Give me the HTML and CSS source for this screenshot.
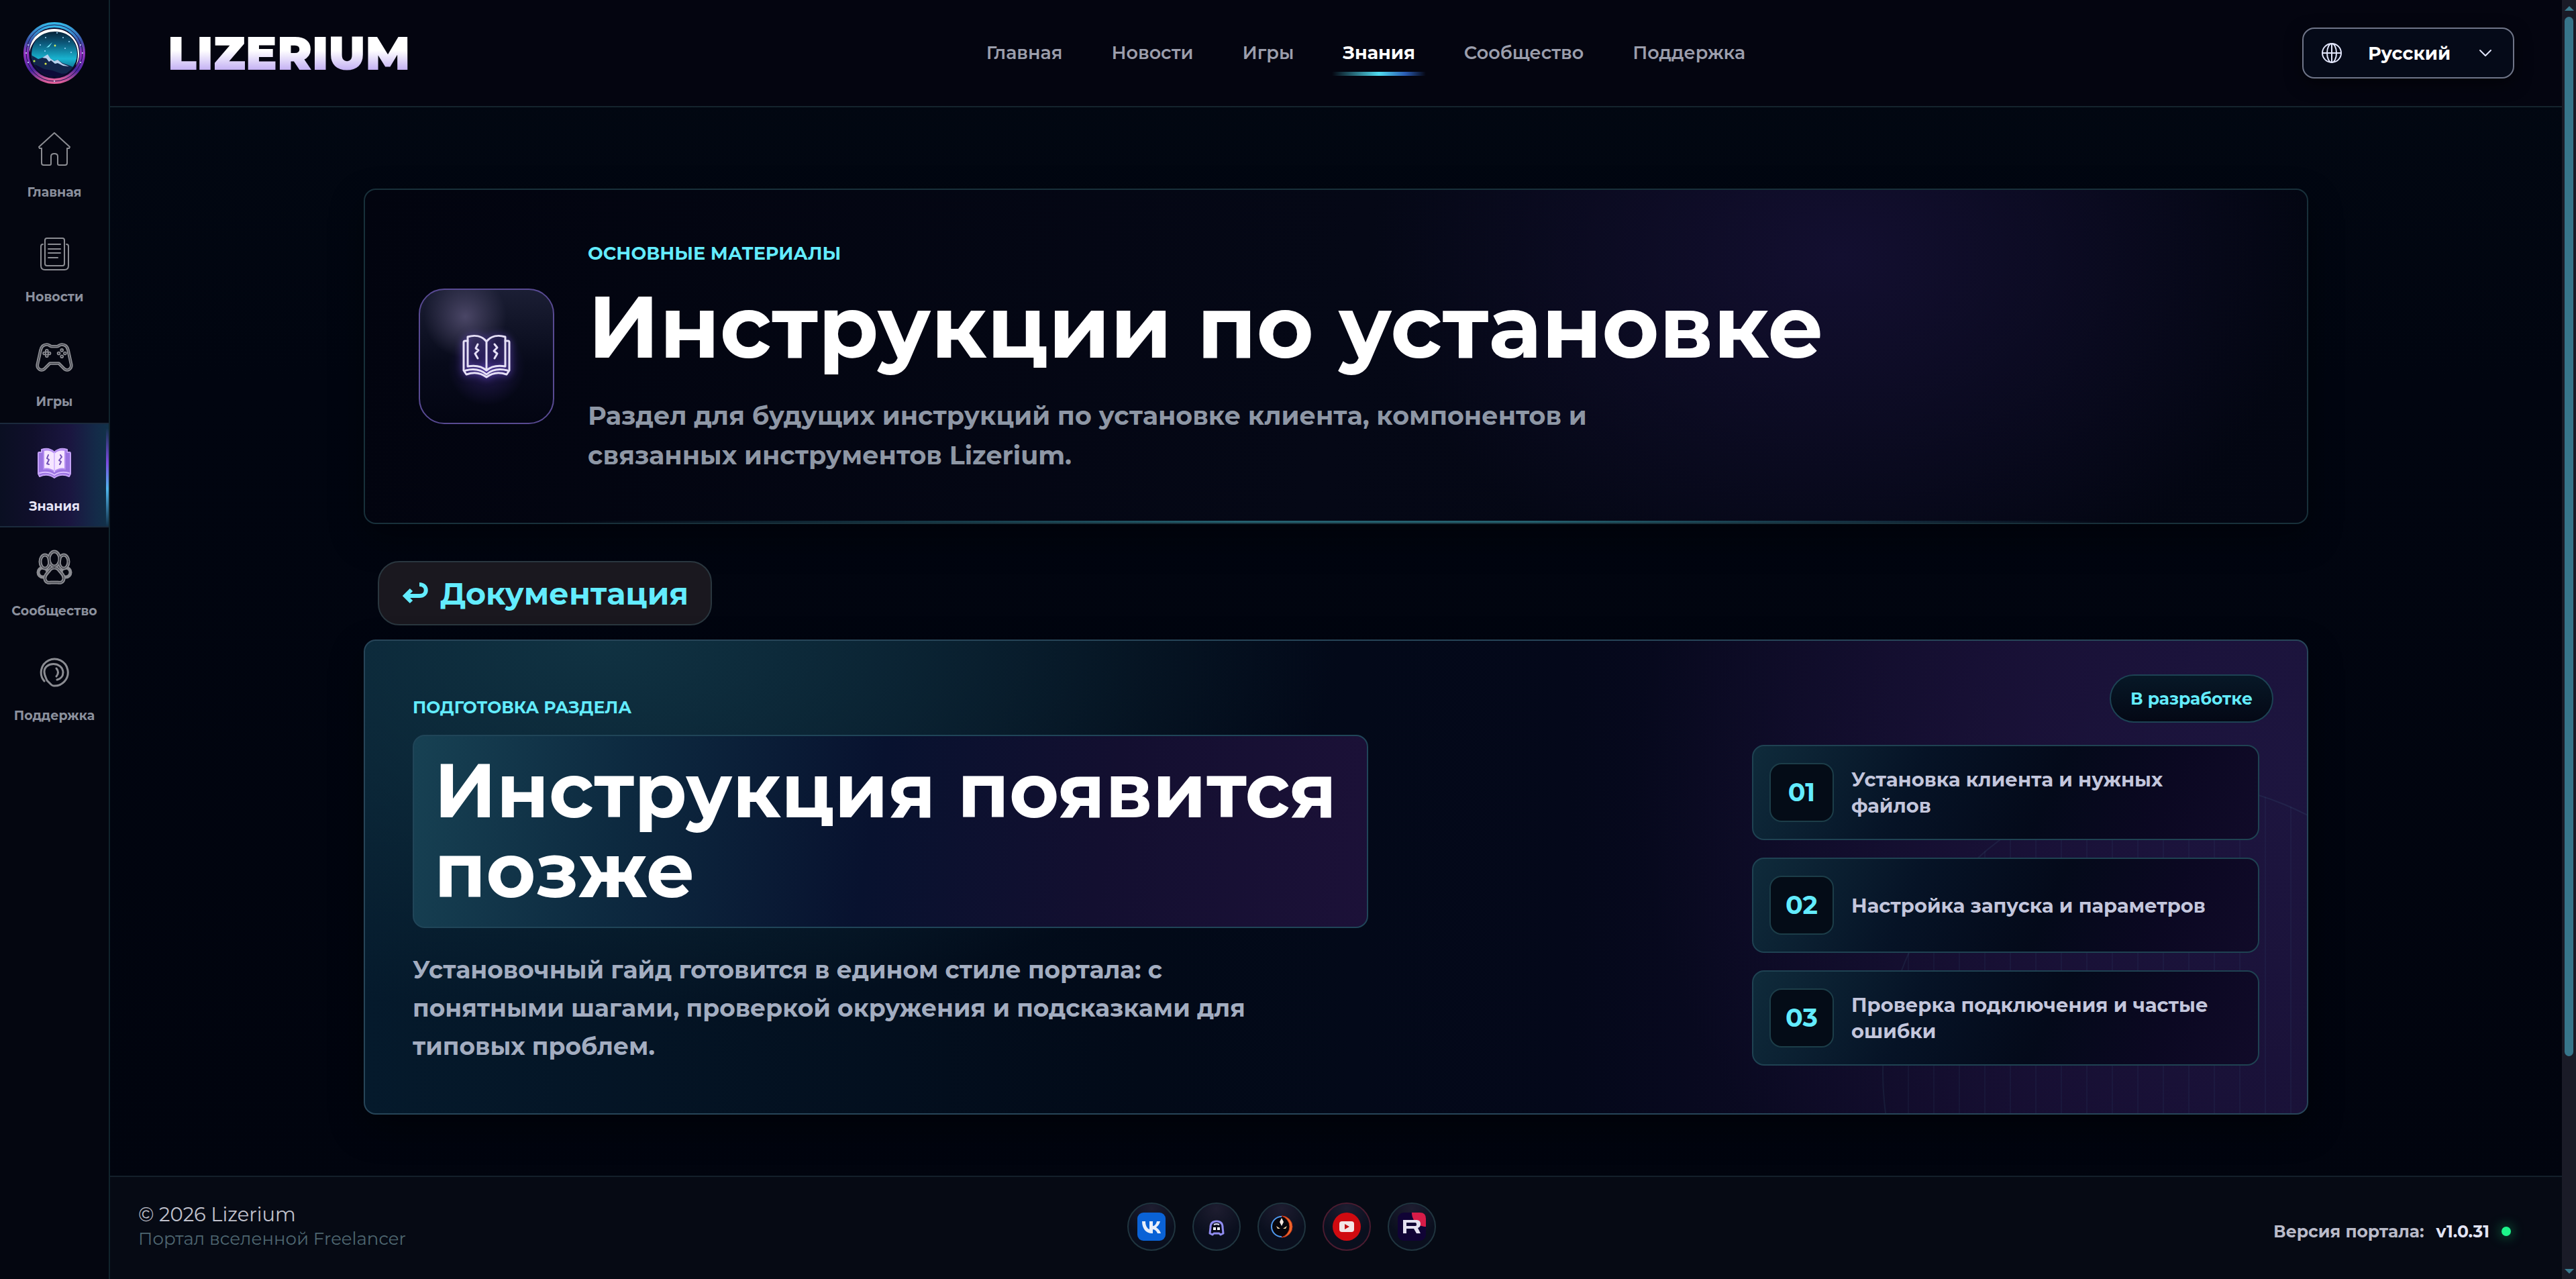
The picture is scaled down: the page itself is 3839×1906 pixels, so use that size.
FILE: index.html
```html
<!DOCTYPE html>
<html lang="ru">
<head>
    <meta charset="UTF-8">
    <meta name="viewport" content="width=device-width, initial-scale=1.0">
    <title>Lizerium - Инструкции по установке</title>
    <link rel="stylesheet" href="styles.css">
</head>
<body>

    <!-- Sidebar -->
    <aside class="sidebar">
        <a href="#" class="sidebar-logo" aria-label="Lizerium">
            <svg viewBox="0 0 94 94" width="94" height="94">
                <defs>
                    <linearGradient id="ring" x1="0" y1="0" x2="0" y2="1">
                        <stop offset="0" stop-color="#35b6e6"/>
                        <stop offset="0.3" stop-color="#3c4fa8"/>
                        <stop offset="0.5" stop-color="#9a35c4"/>
                        <stop offset="0.8" stop-color="#4a25a0"/>
                        <stop offset="1" stop-color="#e0609a"/>
                    </linearGradient>
                    <linearGradient id="sky" x1="0" y1="0" x2="0" y2="1">
                        <stop offset="0" stop-color="#071426"/>
                        <stop offset="0.3" stop-color="#0c5a7c"/>
                        <stop offset="0.6" stop-color="#18b4d0"/>
                        <stop offset="1" stop-color="#0a2a50"/>
                    </linearGradient>
                    <clipPath id="disc"><circle cx="47" cy="48" r="34"/></clipPath>
                </defs>
                <circle cx="47" cy="47" r="44" fill="#0c0a2a" stroke="url(#ring)" stroke-width="4"/>
                <circle cx="47" cy="47" r="40" fill="none" stroke="url(#ring)" stroke-width="4"/>
                <circle cx="47" cy="47" r="42" fill="none" stroke="#1b1450" stroke-width="1"/>
                <g fill="#cfe9ff">
                    <circle cx="5" cy="47" r="1"/><circle cx="89" cy="47" r="1"/><circle cx="47" cy="89" r="1"/>
                    <circle cx="8" cy="61" r="1"/><circle cx="86" cy="61" r="1"/><circle cx="8" cy="35" r="1"/><circle cx="86" cy="35" r="1"/>
                </g>
                <g clip-path="url(#disc)">
                    <rect x="10" y="10" width="74" height="76" fill="url(#sky)"/>
                    <g fill="#9fd8ff">
                        <circle cx="34" cy="24" r="1"/><circle cx="51" cy="17" r="1"/><circle cx="60" cy="24" r="1"/><circle cx="69" cy="30" r="1"/>
                        <circle cx="26" cy="35" r="1"/><circle cx="63" cy="40" r="1"/><circle cx="72" cy="46" r="1"/><circle cx="33" cy="44" r="1"/>
                    </g>
                    <path d="M35 39l9-8-5 7z" fill="#7df0ff"/>
                    <circle cx="48" cy="36" r="1.4" fill="#d6f05a"/>
                    <path d="M8 48l8 4 7 4 6-2 8-4 4 5 6 4 5-2 7 5 9 3 14 6v16H8z" fill="#12264c"/>
                    <path d="M29 54l8-5 4 6 6 4 5-2 7 6 10 4-9-1-8-4-4 1-6-5-3 2-4-5z" fill="#b8d2ee"/>
                    <path d="M8 62l12 3 12 6 12 2 14 5 20-2v14H8z" fill="#0d0b38"/>
                    <circle cx="17" cy="59" r="1.6" fill="#b9e648"/><circle cx="34" cy="63" r="1.6" fill="#d9e648"/>
                </g>
                <path d="M10 46C10 25 26 11 47 11c21 0 37 16 37 37 0 7-2 13-5 18 2-6 3-11 3-17 0-20-14-34-34-34-19 0-34 12-38 31z" fill="#fff"/>
            </svg>
        </a>
        <nav class="sidebar-nav" aria-label="Разделы">
            <a href="#" class="side-link">
                <svg class="side-icon" viewBox="0 0 56 56">
                    <path d="M28 4L5 25l1 2h3v22q0 3 3 3h9q2 0 2-2V39q0-4 5-4t5 4v11q0 2 2 2h9q3 0 3-3V27h3l1-2z"/>
                </svg>
                <span>Главная</span>
            </a>
            <a href="#" class="side-link">
                <svg class="side-icon" viewBox="0 0 56 56">
                    <rect x="14" y="5" width="29" height="41" rx="3"/>
                    <path d="M11 14q-3 0-3 3v29q0 6 6 6h29q6 0 6-6V17q0-3-3-3M19 14h18M19 21h18M19 27h18M19 34h14"/>
                </svg>
                <span>Новости</span>
            </a>
            <a href="#" class="side-link">
                <svg class="side-icon" viewBox="-2 1 60 60">
                    <path d="M16 9c-6 0-9 4-10 9L1 41c-1 7 6 11 11 7l9-9h14l9 9c5 4 12 0 11-7l-5-23c-1-5-4-9-10-9-4 0-5 3-8 3h-8c-3 0-4-3-8-3z" class="thick"/>
                    <path d="M16 9c-6 0-9 4-10 9L1 41c-1 7 6 11 11 7l9-9h14l9 9c5 4 12 0 11-7l-5-23c-1-5-4-9-10-9-4 0-5 3-8 3h-8c-3 0-4-3-8-3z" class="groove"/>
                    <circle cx="16" cy="19" r="2"/><circle cx="16" cy="27" r="2"/><circle cx="12" cy="23" r="2"/><circle cx="20" cy="23" r="2"/>
                    <circle cx="40" cy="18" r="2"/><circle cx="40" cy="28" r="2"/><circle cx="35" cy="23" r="2"/><circle cx="45" cy="23" r="2"/>
                </svg>
                <span>Игры</span>
            </a>
            <a href="#" class="side-link active">
                <svg class="side-icon" viewBox="0 0 56 56">
                    <path d="M28 12C22 6 15 6 9 8v4H5q-1 0-1 2v30l2 4c7-3 15-3 22 2 7-5 15-5 22-2l2-4V14q0-2-1-2h-4V8c-6-2-13-2-19 4z" fill="#9a72e0" stroke="#c4a2f6"/>
                    <path d="M28 13c-5-5-11-5-16-4v28c5-1 11 0 16 4 5-4 11-5 16-4V9c-5-1-11-1-16 4z" fill="#f6e6ff" stroke="#b48cf0"/>
                    <path d="M28 13v28M6 43c8-2 15-2 22 3 7-5 14-5 22-3" stroke="#d9bdff"/>
                    <path d="M19 16l-2 5 3 2-3 6 3 1M37 16l2 3-4 5 3 2-2 4" stroke="#6f4fb4"/>
                </svg>
                <span>Знания</span>
            </a>
            <a href="#" class="side-link">
                <svg class="side-icon" viewBox="0 0 56 56">
                    <g class="thick">
                        <ellipse cx="11" cy="35" rx="7" ry="7"/>
                        <ellipse cx="45" cy="35" rx="7" ry="7"/>
                        <ellipse cx="14" cy="19" rx="7" ry="10"/>
                        <ellipse cx="42" cy="19" rx="7" ry="10"/>
                        <ellipse cx="28" cy="15" rx="8" ry="11"/>
                        <path d="M28 28c-4 0-6 2-8 5-3 4-7 6-6 12 1 5 5 6 9 5h10c4 1 8 0 9-5 1-6-3-8-6-12-2-3-4-5-8-5z"/>
                    </g>
                    <g class="groove">
                        <ellipse cx="14" cy="19" rx="7" ry="10"/>
                        <ellipse cx="42" cy="19" rx="7" ry="10"/>
                        <ellipse cx="28" cy="15" rx="8" ry="11"/>
                        <path d="M28 28c-4 0-6 2-8 5-3 4-7 6-6 12 1 5 5 6 9 5h10c4 1 8 0 9-5 1-6-3-8-6-12-2-3-4-5-8-5z"/>
                    </g>
                </svg>
                <span>Сообщество</span>
            </a>
            <a href="#" class="side-link">
                <svg class="side-icon" viewBox="0 0 56 56">
                    <g class="medium">
                        <path d="M13 41A20 20 0 1 1 27 48q-2 0-4-2l-6-6c-2-5-4-8-4-13 0-15 27-16 28 1 0 6-4 10-9 11"/>
                        <path d="M31 22q5 6 0 12"/>
                    </g>
                </svg>
                <span>Поддержка</span>
            </a>
        </nav>
    </aside>

    <div class="page">
        <!-- Top bar -->
        <header class="topbar">
            <a href="#" class="brand">LIZERIUM</a>
            <nav class="topnav" aria-label="Главное меню">
                <a href="#">Главная</a>
                <a href="#">Новости</a>
                <a href="#">Игры</a>
                <a href="#" class="active">Знания</a>
                <a href="#">Сообщество</a>
                <a href="#">Поддержка</a>
            </nav>
            <label class="lang">
                <svg viewBox="0 0 32 32" width="32" height="32">
                    <circle cx="16" cy="16" r="14"/>
                    <ellipse cx="16" cy="16" rx="7" ry="14"/>
                    <path d="M2 16h28M16 2v28"/>
                </svg>
                <select aria-label="Язык">
                    <option>Русский</option>
                    <option>English</option>
                </select>
                <svg viewBox="0 0 20 20" width="20" height="20">
                    <path d="M2 6l8 8 8-8"/>
                </svg>
            </label>
        </header>

        <main class="content">
            <!-- Hero -->
            <section class="hero">
                <div class="hero-icon">
                    <svg viewBox="0 0 72 66" width="72" height="66">
                        <path d="M36 11C29 2 18 1 8 4v44c11-2 20-1 28 6 8-7 17-8 28-6V4C54 1 43 2 36 11zM36 11v43"/>
                        <path d="M8 10H4q-2 0-2 2v42l4 6c11-4 21-3 30 4 9-7 19-8 30-4l4-6V12q0-2-2-2h-4M5 54c12-3 22-2 31 6 9-8 19-9 31-6"/>
                        <path d="M23 15l-3 6 4 3-5 5 4 7M48 15l4 5-5 5 5 4-4 7"/>
                    </svg>
                </div>
                <div class="hero-text">
                    <p class="eyebrow">ОСНОВНЫЕ МАТЕРИАЛЫ</p>
                    <h1>Инструкции по установке</h1>
                    <p class="lead">Раздел для будущих инструкций по установке клиента, компонентов и связанных инструментов Lizerium.</p>
                </div>
            </section>

            <a href="#" class="back-link">
                <svg viewBox="0 0 40 32" width="40" height="32">
                    <path d="M27 3c13 0 13 17 0 17H6M15 11l-9 9 9 9"/>
                </svg>
                <span>Документация</span>
            </a>

            <!-- Guide placeholder -->
            <section class="guide">
                <span class="badge">В разработке</span>
                <div class="guide-text">
                    <p class="eyebrow small">ПОДГОТОВКА РАЗДЕЛА</p>
                    <h2>Инструкция появится позже</h2>
                    <p class="guide-lead">Установочный гайд готовится в едином стиле портала: с понятными шагами, проверкой окружения и подсказками для типовых проблем.</p>
                </div>
                <ol class="steps">
                    <li><b>01</b><span>Установка клиента и нужных файлов</span></li>
                    <li><b>02</b><span>Настройка запуска и параметров</span></li>
                    <li><b>03</b><span>Проверка подключения и частые ошибки</span></li>
                </ol>
            </section>
        </main>

        <!-- Footer -->
        <footer class="footer">
            <div class="copy">
                <p class="copy-name">© 2026 Lizerium</p>
                <p class="copy-sub">Портал вселенной Freelancer</p>
            </div>
            <div class="socials">
                <a href="#" aria-label="VK">
                    <svg viewBox="0 0 42 42" width="42" height="42">
                        <rect width="42" height="42" rx="9" fill="#0a62d6"/>
                        <path d="M7 13h5c0 7 3 11 6 12V13h5v7c3 0 5-3 6-7h5c-1 4-3 7-6 9 3 2 6 5 7 9h-5c-1-3-4-6-7-6v6h-1C13 31 7 24 7 13z" fill="#e9effa"/>
                    </svg>
                </a>
                <a href="#" aria-label="Discord">
                    <svg viewBox="0 0 42 42" width="42" height="42">
                        <path d="M21 13c-6 0-9 3-9 9l-1 9 4 2 2-2h8l2 2 4-2-1-9c0-6-3-9-9-9z" fill="#0a0c1c" stroke="#8f8cf0" stroke-width="3" stroke-linejoin="round"/>
                        <path d="M17 18q4-2 8 0" fill="none" stroke="#e8e8ff" stroke-width="2"/>
                        <rect x="16" y="22" width="4" height="4" fill="#fff"/><rect x="22" y="22" width="4" height="4" fill="#fff"/>
                    </svg>
                </a>
                <a href="#" aria-label="Форум">
                    <svg viewBox="0 0 42 42" width="42" height="42">
                        <circle cx="21" cy="21" r="15" fill="#07060c"/>
                        <path d="M21 6a15 15 0 0 0 0 30" fill="none" stroke="#4f9af0" stroke-width="2"/>
                        <path d="M21 5a16 16 0 0 1 0 32 17 17 0 0 0 12-16 17 17 0 0 0-12-16z" fill="#f0682a" stroke="#c8341a"/>
                        <path d="M21 8l3 6-3 6-3-6z" fill="#f4e8e0"/>
                        <path d="M13 20l6 4-4 0zM29 20l-6 4 4 0z" fill="#ffe0b0"/>
                    </svg>
                </a>
                <a href="#" class="yt" aria-label="YouTube">
                    <svg viewBox="0 0 42 42" width="42" height="42">
                        <circle cx="21" cy="21" r="21" fill="#d00a10"/>
                        <rect x="10" y="13" width="22" height="16" rx="4" fill="#f3e4e6"/>
                        <path d="M18 17l7 4-7 4z" fill="#c00a10"/>
                    </svg>
                </a>
                <a href="#" aria-label="Rutube">
                    <svg viewBox="0 0 42 42" width="42" height="42">
                        <rect width="42" height="42" rx="9" fill="#100335"/>
                        <path d="M21 0h12q9 0 9 9v12C30 21 21 12 21 0z" fill="#d81c48"/>
                        <path d="M8 11h19c5 0 7 2 7 6 0 3-1 5-4 6l4 8h-6l-4-7H13v7H8zM13 15v5h13c2 0 2-1 2-2s0-3-2-3z" fill="#e4e0f0"/>
                    </svg>
                </a>
            </div>
            <p class="version">Версия портала: <strong>v1.0.31</strong><i class="dot"></i></p>
        </footer>
    </div>

    <!-- Scroll track -->
    <div class="scroll-track" aria-hidden="true">
        <i class="arrow up"></i>
        <i class="thumb"></i>
        <i class="arrow down"></i>
    </div>

</body>
</html>
```
FILE: styles.css
```css
* {
    box-sizing: border-box;
}

body {
    margin: 0;
    min-height: 100vh;
    display: flex;
    font-family: Montserrat, Inter, "Open Sans", sans-serif;
    background: linear-gradient(180deg, #020812 0%, #010510 30%, #01040e 100%);
    color: #fff;
}

p, h1, h2, ol {
    margin: 0;
    padding: 0;
}

a {
    color: inherit;
    text-decoration: none;
}

svg {
    display: block;
    flex: none;
}

/* Sidebar */
.sidebar {
    width: 164px;
    flex: none;
    background-color: #040610;
    border-right: 2px solid #11232c;
}

.sidebar-logo {
    height: 162px;
    display: flex;
    justify-content: center;
    padding-top: 32px;
}

.side-link {
    display: flex;
    flex-direction: column;
    align-items: center;
    gap: 25px;
    padding: 30px 0 17px;
    border: 2px solid transparent;
    border-width: 2px 0;
    font-size: 19px;
    line-height: 24px;
    font-weight: 700;
    color: #8b909d;
}

.side-icon {
    width: 56px;
    height: 56px;
    fill: none;
    stroke: #8b8c92;
    stroke-width: 2;
    stroke-linejoin: round;
    stroke-linecap: round;
}

.side-icon .thick {
    fill: #040610;
    stroke-width: 5;
}

.side-icon .medium {
    stroke-width: 3;
}

.side-icon .groove {
    stroke: #2c2e36;
    stroke-width: 1;
}

.side-link.active {
    position: relative;
    color: #e6e4f6;
    border-color: #1b2a3c;
    background: linear-gradient(90deg, #0a0f22 0%, #100f2b 30%, #1a1640 65%, #142a48 88%, #12324a 100%);
}

.side-link.active::after {
    content: "";
    position: absolute;
    right: 0;
    top: 6px;
    bottom: 0;
    width: 4px;
    background: linear-gradient(180deg, transparent, #7b4be0 35%, #4fb6ec 62%, transparent);
}

/* Page column */
.page {
    flex: 1;
    min-width: 0;
    display: flex;
    flex-direction: column;
}

.topbar {
    height: 160px;
    display: flex;
    align-items: center;
    justify-content: space-between;
    padding: 0 71px 0 86px;
    background-color: #040510;
    border-bottom: 2px solid #15242d;
}

.brand {
    min-width: 390px;
    font-size: 70px;
    line-height: 80px;
    font-weight: 900;
    background: linear-gradient(180deg, #fff 45%, #c6b4f4 80%);
    -webkit-background-clip: text;
    background-clip: text;
    color: transparent;
}

.topnav {
    display: flex;
    gap: 73px;
    font-size: 27px;
    line-height: 36px;
    font-weight: 600;
    color: #9b9eac;
}

.topnav .active {
    position: relative;
    color: #fff;
    font-weight: 700;
}

.topnav .active::after {
    content: "";
    position: absolute;
    left: -16px;
    right: -16px;
    top: 46px;
    height: 6px;
    background: linear-gradient(90deg, transparent, #4fdcf0 50%, #2a5cb4 78%, transparent);
}

.lang {
    width: 316px;
    height: 76px;
    display: flex;
    align-items: center;
    padding: 0 31px 0 26px;
    border: 2px solid #6f7588;
    border-radius: 18px;
    background-color: #050a18;
    box-shadow: 0 8px 24px rgba(0, 0, 0, 0.5);
}

.lang svg {
    fill: none;
    stroke: #e2e6fb;
    stroke-width: 2;
    stroke-linecap: round;
    stroke-linejoin: round;
}

.lang select {
    flex: 1;
    min-width: 0;
    padding: 0 0 0 38px;
    appearance: none;
    border: none;
    background: none;
    color: #fff;
    font-family: inherit;
    font-size: 27px;
    font-weight: 700;
}

/* Content */
.content {
    flex: 1;
    width: 100%;
    max-width: 2898px;
    margin: 0 auto;
    padding: 121px 0 90px;
}

.hero {
    display: flex;
    align-items: center;
    gap: 50px;
    padding: 71px 80px;
    border: 2px solid #18303a;
    border-radius: 18px;
    background:
        linear-gradient(90deg, transparent 10%, #24606e 45%, #24606e 60%, transparent 90%) bottom / 100% 3px no-repeat,
        radial-gradient(ellipse 700px 520px at 76% 20%, #130f30 0%, rgba(19, 15, 48, 0) 100%),
        linear-gradient(100deg, #02040f 0%, #050816 50%, #030612 100%);
    box-shadow: 0 20px 50px rgba(0, 0, 0, 0.4);
}

.hero-icon {
    width: 202px;
    height: 202px;
    flex: none;
    display: flex;
    align-items: center;
    justify-content: center;
    border: 2px solid #584a92;
    border-radius: 38px;
    background:
        radial-gradient(circle at 34% 20%, #4a4666 0%, rgba(74, 70, 102, 0) 30%),
        radial-gradient(circle at 50% 58%, #251a52 0%, rgba(37, 26, 82, 0) 38%),
        linear-gradient(180deg, #1b1e34 0%, #070a1a 55%, #030512 100%);
}

.hero-icon svg {
    fill: none;
    stroke: #e6e0f6;
    stroke-width: 3;
    stroke-linejoin: round;
    stroke-linecap: round;
    filter: drop-shadow(0 0 6px #6a4cc8);
}

.eyebrow {
    margin-bottom: 18px;
    font-size: 27px;
    line-height: 48px;
    font-weight: 700;
    color: #63ecff;
}

h1 {
    margin-bottom: 36px;
    font-size: 130px;
    line-height: 134px;
    font-weight: 700;
}

.lead {
    max-width: 1560px;
    font-size: 38px;
    line-height: 59px;
    font-weight: 700;
    color: #8e97a5;
}

.back-link {
    display: flex;
    align-items: center;
    gap: 18px;
    width: fit-content;
    height: 96px;
    margin: 55px 0 21px 21px;
    padding: 0 33px;
    border: 2px solid #2a373f;
    border-radius: 32px;
    background-color: #1a181f;
    font-size: 46px;
    font-weight: 700;
    color: #63ecff;
}

.back-link svg {
    fill: none;
    stroke: #63ecff;
    stroke-width: 6;
}

/* Guide card */
.guide {
    position: relative;
    z-index: 0;
    overflow: hidden;
    display: flex;
    justify-content: space-between;
    align-items: flex-end;
    padding: 83px 71px 71px;
    border: 2px solid #274558;
    border-radius: 18px;
    background:
        radial-gradient(ellipse 1100px 560px at 12% 0%, #103242 0%, rgba(16, 50, 66, 0) 100%),
        radial-gradient(ellipse 1000px 900px at 100% 30%, #1d153f 0%, rgba(29, 21, 63, 0) 100%),
        linear-gradient(90deg, #051a2c 0%, #020a18 40%, #04081a 62%, #130c2c 85%, #170f33 100%);
    box-shadow: 0 20px 50px rgba(0, 0, 0, 0.4);
}

/* Faint striped planet in the corner */
.guide::before {
    content: "";
    position: absolute;
    z-index: -1;
    right: -235px;
    bottom: -374px;
    width: 864px;
    height: 864px;
    border: 2px solid rgba(100, 200, 220, 0.08);
    border-radius: 50%;
    background: repeating-linear-gradient(90deg, transparent 0, transparent 36px, rgba(100, 180, 220, 0.05) 36px, rgba(100, 180, 220, 0.05) 38px);
}

.badge {
    position: absolute;
    top: 50px;
    right: 50px;
    padding: 0 29px;
    border: 2px solid #1d4354;
    border-radius: 36px;
    background: linear-gradient(180deg, #071827, #040815);
    font-size: 25px;
    line-height: 68px;
    font-weight: 700;
    color: #63ecff;
}

.guide-text {
    width: 1424px;
}

.eyebrow.small {
    margin-bottom: 25px;
    font-size: 25px;
    line-height: 32px;
}

h2 {
    margin-bottom: 34px;
    padding: 21px 30px 25px;
    border: 2px solid #204558;
    border-radius: 18px;
    background: linear-gradient(100deg, #174153 0%, #0d2a40 22%, #08122f 48%, #130f30 72%, #1c1138 100%);
    font-size: 113px;
    line-height: 119px;
    font-weight: 700;
}

.guide-lead {
    max-width: 1260px;
    font-size: 36px;
    line-height: 57px;
    font-weight: 700;
    color: #a3adc0;
}

.steps {
    width: 756px;
    display: flex;
    flex-direction: column;
    gap: 26px;
    list-style: none;
}

.steps li {
    min-height: 142px;
    display: flex;
    align-items: center;
    gap: 26px;
    padding: 24px 40px 24px 24px;
    border: 2px solid #1f4252;
    border-radius: 18px;
    background: linear-gradient(115deg, #0f2b3b 0%, #061326 32%, #040a1a 58%, #0b0822 80%, #110b29 100%);
    font-size: 29px;
    line-height: 39px;
    font-weight: 700;
    color: #c3c6dc;
}

.steps b {
    width: 96px;
    height: 88px;
    flex: none;
    border: 2px solid #1c3d48;
    border-radius: 18px;
    background-color: #040c17;
    font-size: 38px;
    line-height: 84px;
    font-weight: 700;
    text-align: center;
    color: #63ecff;
}

/* Footer */
.footer {
    min-height: 154px;
    display: grid;
    grid-template-columns: 23fr auto 25fr;
    align-items: center;
    padding: 0 76px 4px 42px;
    border-top: 2px solid #14202b;
    background-color: #060a14;
}

.copy-name {
    font-size: 29px;
    line-height: 36px;
    color: #c0c1cc;
}

.copy-sub {
    font-size: 26px;
    line-height: 36px;
    color: #4e6670;
}

.socials {
    display: flex;
    gap: 25px;
}

.socials a {
    width: 72px;
    height: 72px;
    display: flex;
    align-items: center;
    justify-content: center;
    border: 2px solid #20353f;
    border-radius: 50%;
    background: radial-gradient(circle at 50% 10%, #1e1d30 0%, #0a0f1e 60%);
}

.socials .yt {
    border-color: #4a1c30;
}

.version {
    display: flex;
    justify-content: flex-end;
    align-items: center;
    gap: 18px;
    padding-top: 14px;
    font-size: 25px;
    font-weight: 700;
    color: #b9bbc9;
}

.version strong {
    font-weight: 700;
    color: #e2e4f4;
}

.dot {
    width: 14px;
    height: 14px;
    border-radius: 50%;
    background-color: #1df48a;
    box-shadow: 0 0 18px #0f9a58;
}

/* Scroll track */
.scroll-track {
    width: 21px;
    flex: none;
    height: 100vh;
    position: sticky;
    top: 0;
    display: flex;
    flex-direction: column;
    align-items: center;
    padding: 9px 0 8px;
    background-color: #1a1b27;
}

.arrow {
    border: 7px solid transparent;
}

.arrow.up {
    border-top: none;
    border-bottom-color: #3b7d91;
}

.arrow.down {
    margin-top: auto;
    border-bottom: none;
    border-top-color: #3b7d91;
}

.thumb {
    width: 13px;
    height: 82%;
    margin-top: 9px;
    border-radius: 7px;
    background-color: #37758a;
}
```
